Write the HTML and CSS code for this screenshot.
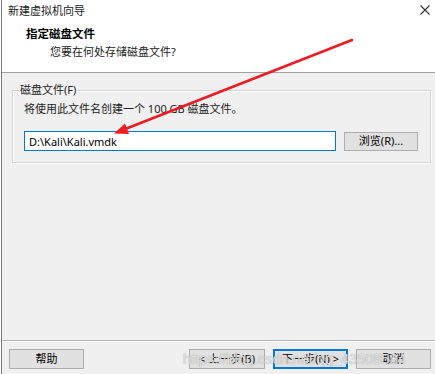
FILE: index.html
```html
<!DOCTYPE html>
<html lang="zh-CN">
<head>
  <meta charset="UTF-8" />
  <meta name="viewport" content="width=device-width, initial-scale=1.0" />
  <title>新建虚拟机向导</title>
  <link rel="stylesheet" href="styles.css">
</head>
<body>
  <div class="window">
    <div class="titlebar">
      <span class="title">新建虚拟机向导</span>
      <svg class="close" width="10" height="10" viewBox="0 0 10 10">
        <path d="M0.5 0.5 L9.5 9.5 M9.5 0.5 L0.5 9.5" stroke="#333" stroke-width="1.1" fill="none" />
      </svg>
    </div>

    <div class="header">
      <h1>指定磁盘文件</h1>
      <p>您要在何处存储磁盘文件?</p>
    </div>

    <div class="content">
      <fieldset class="group">
        <legend>磁盘文件(F)</legend>
        <p class="desc">将使用此文件名创建一个 100 GB 磁盘文件。</p>
        <div class="file-row">
          <input type="text" class="path" value="D:\Kali\Kali.vmdk" />
          <button class="btn">浏览(R)...</button>
        </div>
      </fieldset>
    </div>

    <div class="footer">
      <button class="btn">帮助</button>
      <div class="nav">
        <button class="btn">&lt; 上一步(B)</button>
        <button class="btn btn-default">下一步(N) &gt;</button>
        <button class="btn">取消</button>
      </div>
    </div>
  </div>

  <!-- annotation drawn over the screenshot -->
  <svg class="arrow" width="435" height="374" viewBox="0 0 435 374">
    <line x1="352" y1="40" x2="124" y2="129.5" stroke="#ec1c24" stroke-width="2.6" stroke-linecap="round" />
    <polygon points="114,133.5 125,123.5 129,134" fill="#ec1c24" />
  </svg>
  <div class="watermark">https://blog.csdn.net/qq_43508584</div>
</body>
</html>
```

FILE: styles.css
```css
* {
  box-sizing: border-box;
  margin: 0;
  padding: 0;
}
html, body {
  width: 435px;
  height: 374px;
  overflow: hidden;
}
body {
  font-family: 'Noto Sans', 'Noto Sans CJK SC', sans-serif;
  font-size: 11px;
  color: #000;
  background: #fff;
  position: relative;
}
.window {
  height: 374px;
  margin-left: 1px;
  border-left: 1px solid #7a7a7a;
  display: flex;
  flex-direction: column;
  background: #f0f0f0;
}
.titlebar {
  height: 20px;
  background: #fff;
  display: flex;
  align-items: center;
  justify-content: space-between;
  padding: 0 5px 1px 6px;
}
.title {
  font-size: 11px;
  color: #222;
}
.header {
  height: 53px;
  background: #fff;
  border-bottom: 1px solid #a0a0a0;
  padding: 6px 0 0 24px;
}
.header h1 {
  font-size: 11.5px;
  font-weight: bold;
  line-height: 16px;
}
.header p {
  margin-top: 3px;
  padding-left: 24px;
  line-height: 14px;
  color: #222;
}
.content {
  flex: 1;
  padding: 11px 5px 0 10px;
}
.group {
  border: 1px solid #d5d5d5;
  box-shadow: inset 1px 1px 0 #fff, 1px 1px 0 #fff;
  padding: 0 12px 11px 11px;
}
.group legend {
  margin-left: -5px;
  padding: 0 1px;
  line-height: 12px;
  color: #222;
}
.desc {
  margin-top: 6px;
  line-height: 14px;
  color: #222;
}
.file-row {
  margin-top: 15px;
  display: flex;
  align-items: center;
  gap: 8px;
}
.path {
  width: 312px;
  height: 20px;
  border: 1px solid #0078d7;
  background: #fff;
  padding: 0 4px;
  font-family: 'Noto Sans', 'Noto Sans CJK SC', sans-serif;
  font-size: 11px;
  color: #000;
  outline: none;
}
.btn {
  width: 75px;
  height: 20px;
  background: #e1e1e1;
  border: 1px solid #adadad;
  font-family: 'Noto Sans', 'Noto Sans CJK SC', sans-serif;
  font-size: 11px;
  color: #000;
  line-height: 16px;
}
.file-row .btn {
  width: 74px;
  height: 19px;
}
.btn-default {
  border-color: #0078d7;
  box-shadow: inset 0 0 0 1px #0078d7;
}
.footer {
  height: 34px;
  border-top: 1px solid #b4b4b4;
  box-shadow: inset 0 1px 0 #fff;
  display: flex;
  justify-content: space-between;
  padding: 8px 4px 0 7px;
}
.nav {
  display: flex;
  gap: 8px;
}
.nav .btn:first-child {
  width: 76px;
}
.arrow {
  position: absolute;
  left: 0;
  top: 0;
  pointer-events: none;
}
.watermark {
  position: absolute;
  left: 183px;
  top: 350px;
  font-family: 'Liberation Sans', sans-serif;
  font-size: 14.5px;
  line-height: 18px;
  color: rgba(245, 245, 245, 0.8);
  text-shadow: 0 0 1px rgba(110, 110, 110, 0.8);
  pointer-events: none;
}
```
